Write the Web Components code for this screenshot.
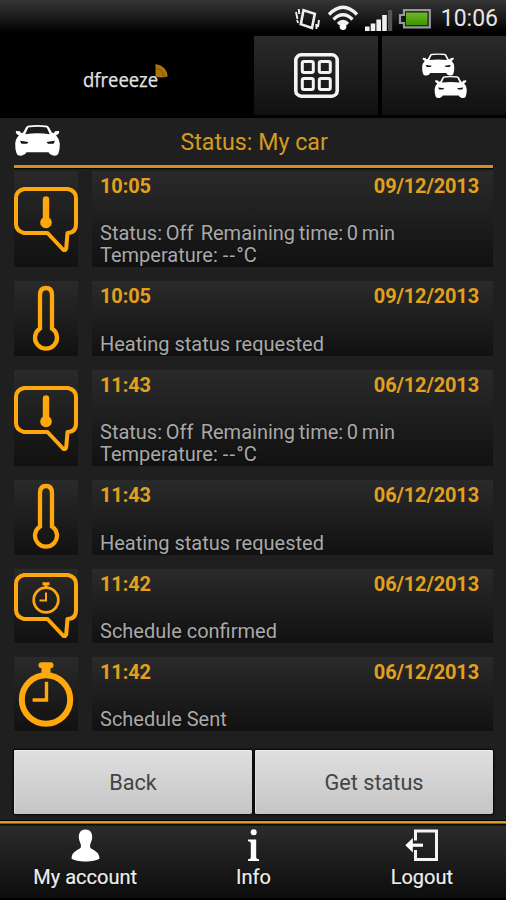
<!DOCTYPE html>
<html lang="en">
<head>
<meta charset="utf-8">
<title>dfreeeze</title>
<style>
html, body { margin: 0; height: 100%; background: #1f1f1f; }
body { font-family: Roboto, "Liberation Sans", sans-serif; overflow: hidden; }
</style>
</head>
<body>
<dfz-app></dfz-app>
<script>
const CAR = `<path fill="#fff" d="M11 2.2Q12 .6 14 .5Q22.500 -.3 31 .5Q33 .6 34 2.200L37 7.700L39 8L40 6.300L44 6Q45 9 41 10.200Q44.600 14 44.800 18.500Q45 25 43.300 28.800Q42 31.200 38 30.500Q34.500 30 33.500 27.200H11.500Q10.500 30 7 30.500Q3 31.200 1.700 28.800Q0 25 .2 18.500Q.4 14 4 10.200Q0 9 1 6L5 6.300L6 8L8 7.700Z"/><path fill="#1c1c1c" d="M13.300 2.600Q22.500 1 31.700 2.600L34.800 9.200Q22.500 7.200 10.200 9.200Z"/><path fill="#111" d="M5 15.800L13.500 17L12 18.800H6.500ZM40 15.800L31.500 17L33 18.800H38.500Z"/>`;
const BUBBLE = `<path fill="none" stroke="#ffa80d" stroke-width="4" stroke-linejoin="round" d="M10 2H54Q62 4 62 11V37Q62 46 53.500 46L52.200 61.500Q51.500 64 49 62.500L33.500 46H10Q2 44 2 37V11Q2 4 10 2Z"/>`;
const ICONS = {
  car: [45, 31, CAR],
  cars: [45, 45, `<g transform="translate(0 .5) scale(.72)">${CAR}</g><g transform="translate(12.500 23) scale(.72)">${CAR}</g>`],
  grid: [45, 45, `<g fill="none" stroke="#f4f4f4"><rect x="1.800" y="1.800" width="41.400" height="41.400" rx="5.500" stroke-width="3.600"/><g stroke-width="3"><rect x="8.300" y="8.600" width="11" height="11" rx="1.800"/><rect x="25.300" y="8.600" width="11" height="11" rx="1.800"/><rect x="8.300" y="25.600" width="11" height="11" rx="1.800"/><rect x="25.300" y="25.600" width="11" height="11" rx="1.800"/></g></g>`],
  tempmsg: [64, 65, BUBBLE + `<path stroke="#ffa80d" stroke-width="6.400" stroke-linecap="round" d="M32 12.500V34"/><circle cx="32" cy="35.500" r="5.800" fill="#ffa80d"/>`],
  timermsg: [64, 65, BUBBLE + `<g fill="none" stroke="#ffa80d"><circle cx="32" cy="27" r="12.300" stroke-width="2.700"/><path stroke-width="2" d="M32 19.500V27.600H25.500"/><path stroke-width="3" d="M28.500 10.700H35.500M32 11V15"/></g>`],
  thermo: [26, 66, `<path fill="none" stroke="#ffa80d" stroke-width="4.300" d="M7 42.500V9Q7 2 13 2Q19 2 19 9V42.500A11 11 0 1 1 7 42.500Z"/>`],
  timer: [54, 65, `<g fill="none" stroke="#ffa80d"><circle cx="27" cy="37.500" r="24.200" stroke-width="6"/><path stroke-width="3.400" stroke-linecap="square" d="M27.500 21.500V38H15.300"/><path stroke-width="6" stroke-linecap="round" d="M22.500 3.300H31.500"/><path stroke-width="9" d="M27 4V14"/></g>`],
  user: [29, 33, `<path fill="#fff" d="M14.500 .5C19 .5 21.200 3.500 21.200 8C21.200 12 19 14 19 17.500C19 21 28.500 21 28.500 29.500C24 33.500 5 33.500 .5 29.500C.5 21 10 21 10 17.500C10 14 7.800 12 7.800 8C7.800 3.500 10 .5 14.500 .5Z"/>`],
  info: [13, 33, `<circle cx="6.700" cy="3.200" r="3" fill="#fff"/><path fill="#fff" d="M1 10.500H9.200V28.500Q9.200 30 12 30.300V32H1V30.300Q3.800 30 3.800 28.500V14Q3.800 12.300 1 12.200Z"/>`],
  logout: [33, 33, `<path fill="none" stroke="#f4f4f4" stroke-width="3" d="M10.500 11.500V2H31.500V30.500H10.500V21"/><path stroke="#fff" stroke-width="3.200" d="M5 16.200H18"/><path fill="#fff" d="M.3 16.200L7.800 9V23.400Z"/>`],
  vibrate: [26, 25, `<g fill="none" stroke="#eee"><path stroke-width="2.600" d="M8.500 3.200L19.800 6.800L17 21L5.800 17.200Z"/><path stroke-width="1.900" d="M1 5L2.500 12M3.800 2L4.300 7M24 13L23 20M21.300 17L21.500 22M2 13L3.200 16"/></g>`],
  wifi: [30, 26, `<g fill="none" stroke="#f2f2f2" stroke-width="3.300"><path d="M1 9.500Q15 -5 29 9.500M5.500 14.500Q15 5 24.500 14.500M10 19Q15 14 20 19"/></g><circle cx="15" cy="21.500" r="3.400" fill="#fff"/>`],
  signal: [28, 23, `<path fill="#f0f0f0" d="M0 17.500H4.600V22H0ZM5.700 14.500H10.300V22H5.700ZM11.400 10.500H16V22H11.400ZM17.200 6H21.800V22H17.200Z"/><path fill="#555" d="M23 1H27.200V22H23Z"/>`],
  battery: [33, 20, `<path fill="#151515" stroke="#999" stroke-width="2.200" d="M6 1.200H31.800V18.400H6V14H2V6H6Z"/><path fill="url(#g)" d="M8 3.500H29.500V16.200H8Z"/><defs><linearGradient id="g" x2="0" y2="1"><stop stop-color="#6db82a"/><stop offset="1" stop-color="#3c9500"/></linearGradient></defs>`],
  fan: [13, 14, `<path fill="#ad730d" d="M.5 0Q12 2 12.700 12.500Q6 14.500 .5 12.500Z"/><path fill="none" stroke="#7a4d00" d="M2 4.500Q8 6 8.500 12.500"/>`]
};

class DfzIcon extends HTMLElement {
  connectedCallback() {
    const [w, h, art] = ICONS[this.getAttribute('name')];
    this.attachShadow({ mode: 'open' }).innerHTML = `
      <style>:host{display:block;flex:none;width:${w}px;height:${h}px}svg{display:block;overflow:visible}</style>
      <svg width="${w}" height="${h}" viewBox="0 0 ${w} ${h}">${art}</svg>`;
  }
}
customElements.define('dfz-icon', DfzIcon);

function define(name, html) {
  const template = document.createElement('template');
  template.innerHTML = html;
  customElements.define(name, class extends HTMLElement {
    constructor() {
      super();
      this.attachShadow({ mode: 'open' }).append(template.content.cloneNode(true));
    }
  });
}

define('dfz-statusbar', `
<style>
:host{display:flex;height:36px;box-sizing:border-box;background:linear-gradient(#353535,#1a1a1a 50%,#000 90%);padding:0 8px 0 295px;align-items:flex-start}
.v{margin-top:7px}.w{margin:5px 0 0 7px}.s{margin:9px 0 0 7px}.b{margin:9px 0 0 5px}
span{margin:6px 0 0 auto;font-size:23px;line-height:26px;color:#e6e6e6;white-space:nowrap}
</style>
<dfz-icon class="v" name="vibrate"></dfz-icon><dfz-icon class="w" name="wifi"></dfz-icon><dfz-icon class="s" name="signal"></dfz-icon><dfz-icon class="b" name="battery"></dfz-icon><span>10:06</span>`);

define('dfz-header', `
<style>
:host{display:grid;grid-template-columns:250px 124px 124px;column-gap:4px;height:82px;background:#000}
.logo{display:flex;padding:28px 0 0 83px;color:#e4e4e4;font:20.500px/30px "Open Sans",sans-serif;align-items:flex-start}
.logo span{display:block;width:72px;white-space:nowrap;transform:scaleX(.9);transform-origin:0 0;-webkit-text-stroke:.25px #e4e4e4}
.tile{height:79px;box-sizing:border-box;background:linear-gradient(#2b2b2b,#101010);display:flex;justify-content:center;padding-top:17px}
</style>
<div class="logo"><span>dfreeeze</span><dfz-icon name="fan"></dfz-icon></div>
<div class="tile"><dfz-icon name="grid"></dfz-icon></div>
<div class="tile"><dfz-icon name="cars"></dfz-icon></div>`);

define('dfz-title', `
<style>
:host{display:flex;height:50px;box-sizing:border-box;margin:0 13px 0 14px;padding:7px 0 0 .5px;border-bottom:3px solid #cf9020;box-shadow:0 1px #090705}
h1{margin:3px 0 0 121px;font-weight:400;font-size:23.200px;line-height:28px;color:#d59a20;white-space:nowrap}
</style>
<dfz-icon name="car"></dfz-icon><h1><slot></slot></h1>`);

define('dfz-entry', `
<style>
:host{display:grid;grid-template-columns:64px 400.500px;column-gap:14px;height:74.400px;color:#a9a9a9;font-size:20px;line-height:22px}
:host([tall]){height:96.400px}
.box{background:linear-gradient(#2a2a2a,#111);min-height:0}
.ic{display:flex;align-items:center;justify-content:center}
.tx{display:flex;flex-direction:column;justify-content:space-between;padding:4px 13.500px 1px 8px;box-sizing:border-box}
.top{display:flex;justify-content:space-between;font-weight:700;color:#e2a01c;font-size:20px;letter-spacing:-.15px}
.msg{white-space:pre-line;text-shadow:0 0 2px #0008}
::slotted(.line){word-spacing:-1.300px}
::slotted(.dash){letter-spacing:1.200px}
</style>
<div class="box ic"><slot name="icon"></slot></div>
<div class="box tx"><div class="top"><slot name="time"></slot><slot name="date"></slot></div><div class="msg"><slot></slot></div></div>`);

define('dfz-button', `
<style>
:host{display:flex;align-items:center;justify-content:center;height:64px;border-radius:2px;background:linear-gradient(#e0e0e0,#c4c4c4);box-shadow:0 0 2px 1px #050505,inset 0 1px #eee,inset 1px 0 #ddd;color:#444;font-size:21.700px;line-height:28px;padding-top:2px;box-sizing:border-box}
</style><span><slot></slot></span>`);

define('dfz-tab', `
<style>
:host{display:flex;flex-direction:column;align-items:center;padding-top:5px;gap:2px;color:#eee;font-size:20px;line-height:26px;white-space:nowrap;text-shadow:0 0 2px #000;-webkit-text-stroke:.2px #eee}
</style><slot name="icon"></slot><span><slot></slot></span>`);

define('dfz-app', `
<style>
:host{display:flex;flex-direction:column;width:506px;height:900px;background:#1f1f1f;overflow:hidden}
.list{display:flex;flex-direction:column;gap:14px;padding:3.100px 0 0 14px}
.actions{display:grid;grid-template-columns:238px 238px;gap:3px;padding:18.500px 0 0 14px}
.tabs{margin-top:auto;height:80px;box-sizing:border-box;border-top:1px solid #000;border-bottom:2px solid #000;background:linear-gradient(#d79a20 0 2px,#80601a 2px 3px,#080808 3px 4px,#2b2b2b 5px,#0d0d0d);display:grid;grid-template-columns:repeat(3,1fr);padding:3px 0 0 1px}
</style>
<dfz-statusbar></dfz-statusbar>
<dfz-header></dfz-header>
<dfz-title>Status: My car</dfz-title>
<div class="list">
<dfz-entry tall><dfz-icon slot="icon" name="tempmsg"></dfz-icon><span slot="time">10:05</span><span slot="date">09/12/2013</span><span class="line">Status: Off&nbsp; Remaining time: 0 min</span><br>Temperature: <span class="dash">--</span>°C</dfz-entry>
<dfz-entry><dfz-icon slot="icon" name="thermo"></dfz-icon><span slot="time">10:05</span><span slot="date">09/12/2013</span>Heating status requested</dfz-entry>
<dfz-entry tall><dfz-icon slot="icon" name="tempmsg"></dfz-icon><span slot="time">11:43</span><span slot="date">06/12/2013</span><span class="line">Status: Off&nbsp; Remaining time: 0 min</span><br>Temperature: <span class="dash">--</span>°C</dfz-entry>
<dfz-entry><dfz-icon slot="icon" name="thermo"></dfz-icon><span slot="time">11:43</span><span slot="date">06/12/2013</span>Heating status requested</dfz-entry>
<dfz-entry><dfz-icon slot="icon" name="timermsg"></dfz-icon><span slot="time">11:42</span><span slot="date">06/12/2013</span>Schedule confirmed</dfz-entry>
<dfz-entry><dfz-icon slot="icon" name="timer"></dfz-icon><span slot="time">11:42</span><span slot="date">06/12/2013</span>Schedule Sent</dfz-entry>
</div>
<div class="actions"><dfz-button>Back</dfz-button><dfz-button>Get status</dfz-button></div>
<div class="tabs">
<dfz-tab><dfz-icon slot="icon" name="user"></dfz-icon>My account</dfz-tab>
<dfz-tab><dfz-icon slot="icon" name="info"></dfz-icon>Info</dfz-tab>
<dfz-tab><dfz-icon slot="icon" name="logout"></dfz-icon>Logout</dfz-tab>
</div>`);
</script>
</body>
</html>
